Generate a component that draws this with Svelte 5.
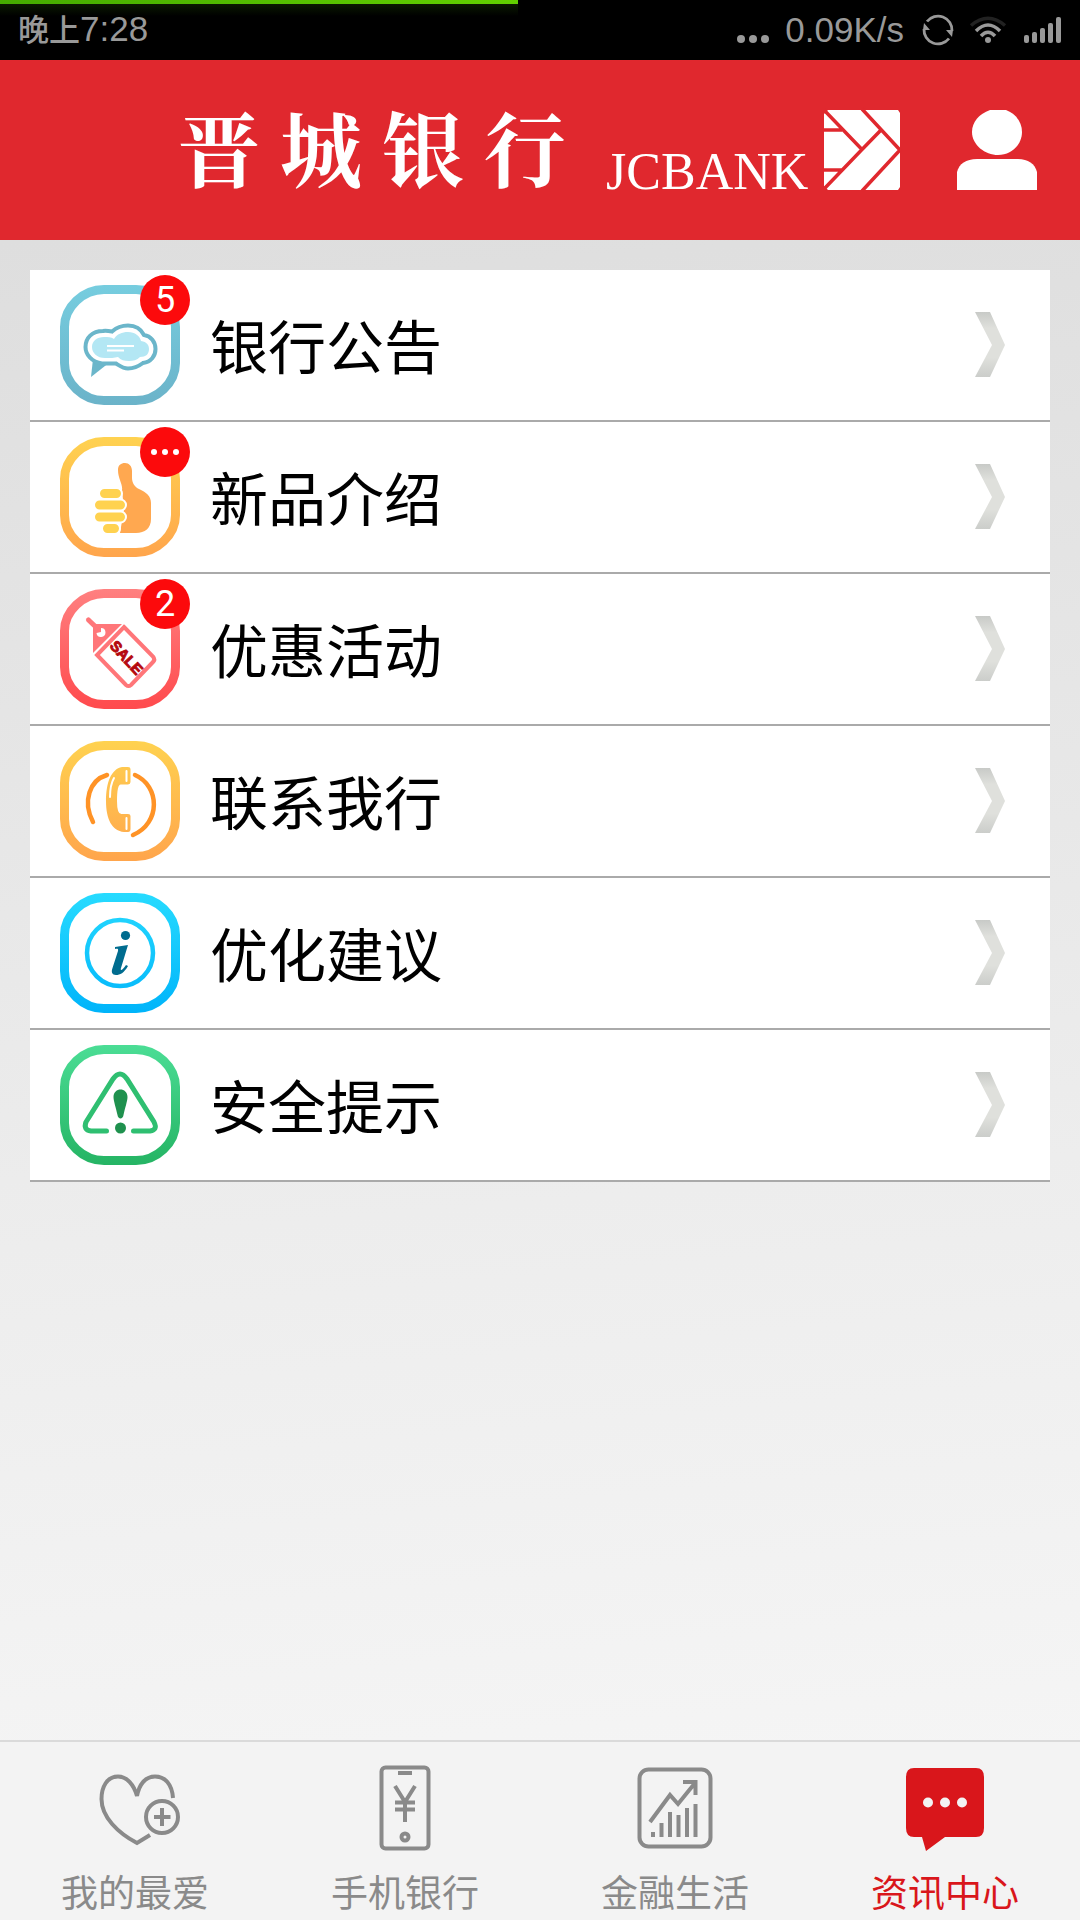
<script>
    const brand = ['晋', '城', '银', '行'];

    const items = [
        { id: 'notice', label: '银行公告', from: '#76cddf', to: '#6bb3c9', badge: '5' },
        { id: 'product', label: '新品介绍', from: '#ffd250', to: '#ffa54c', badge: 'more' },
        { id: 'sale', label: '优惠活动', from: '#ff8080', to: '#ff4a4d', badge: '2' },
        { id: 'contact', label: '联系我行', from: '#ffd250', to: '#ffa54c' },
        { id: 'advice', label: '优化建议', from: '#27dbff', to: '#00b4fa' },
        { id: 'safety', label: '安全提示', from: '#4bdd95', to: '#25b464' }
    ];

    const tabs = [
        { id: 'favorite', label: '我的最爱' },
        { id: 'mobile', label: '手机银行' },
        { id: 'finance', label: '金融生活' },
        { id: 'news', label: '资讯中心' }
    ];

    let activeTab = $state('news');

    const signalBars = [8, 11, 15, 20, 26];
    const progress = 48;
</script>

<div class="page">
    <div class="status-bar">
        <div class="progress" style="width: {progress}%"></div>
        <span class="time"><span class="period">晚上</span>7:28</span>
        <div class="status-right">
            <svg class="dots" width="32" height="34" viewBox="0 0 32 34" fill="#999">
                <circle cx="4" cy="26" r="4" />
                <circle cx="16" cy="26" r="4" />
                <circle cx="28" cy="26" r="4" />
            </svg>
            <span class="speed">0.09K/s</span>
            <svg class="sync" width="32" height="32" viewBox="0 0 32 32">
                <path d="M5 7.500A14 14 0 0 1 30 17M27 24.500A14 14 0 0 1 2 15" fill="none" stroke="#999" stroke-width="2.800" />
                <path d="M24 16h7l-1 7zM8 16H1l1-7z" fill="#999" />
            </svg>
            <svg class="wifi" width="36" height="28" viewBox="0 0 36 28" fill="none" stroke-width="3.500">
                <path d="M1 9.500Q18-5 35 9.500" stroke="#222" />
                <path d="M6 15Q18 3 30 15" stroke="#999" />
                <path d="M11 20Q18 12.500 25 20" stroke="#999" />
                <circle cx="18" cy="24" r="3" fill="#999" />
            </svg>
            <svg class="signal" width="38" height="26" viewBox="0 0 38 26" fill="#999">
                {#each signalBars as h, i}
                    <rect x={i * 8} y={26 - h} width="5" height={h} rx="2" />
                {/each}
            </svg>
        </div>
    </div>

    <header class="header">
        <h1 class="brand">
            {#each brand as ch}<span>{ch}</span>{/each}
        </h1>
        <span class="brand-en">JCBANK</span>
        <svg class="mark" width="76" height="80" viewBox="0 0 76 80">
            <rect width="76" height="80" fill="#fff" />
            <g fill="none" stroke="#e0282e" stroke-width="3.500">
                <path d="M0 0L38 39.500L0 79M38-1L76 40L38 81M38 39.500L57 20M0 20H18M0 60H18" />
            </g>
            <path d="M0 0H4L0 4zM0 80H4L0 76zM76 0H74L76 3zM76 80H74L76 77z" fill="#e0282e" />
        </svg>
        <button class="user" aria-label="用户">
            <svg width="80" height="80" viewBox="0 0 80 80" fill="#fff">
                <path d="M33 0H49C59 4 65 12 65 22C65 35 54 45 41 45S15 35 15 22C15 12 22 4 33 0z" />
                <path d="M0 62C2 54 9 49 20 49H61C71 49 78 54 80 62V80H0z" />
            </svg>
        </button>
    </header>

    <main class="content">
        <ul class="list">
            {#each items as item}
                <li>
                    <a class="row" href="#{item.id}">
                        <span class="icon">
                            <svg width="120" height="120" viewBox="0 0 120 120" fill="none">
                                <defs>
                                    <linearGradient id="g-{item.id}" x1="0" y1="0" x2="0" y2="120" gradientUnits="userSpaceOnUse">
                                        <stop offset="0" stop-color={item.from} />
                                        <stop offset="1" stop-color={item.to} />
                                    </linearGradient>
                                </defs>
                                <path
                                    d="M44 4.500H76C97 4.500 115.500 22 115.500 42V78C115.500 98 97 115.500 76 115.500H44C23 115.500 4.500 98 4.500 78V42C4.500 22 23 4.500 44 4.500z"
                                    stroke="url(#g-{item.id})"
                                    stroke-width="9"
                                />
                                {#if item.id === 'notice'}
                                    <path d="M33 74L31 92L50 77z" fill="#6bb6ca" />
                                    <path d="M52 46.500C57 42 62 40.500 68 40.500C75 40.500 81 44 84 50C91 51 95.500 57 95.500 64C95.500 71 91 77 83 78C79 81 74 83.500 68 83.500C63 83.500 60 81 56 78.500H42C32 77 25.500 70 25.500 62C25.500 53 32 46 43 46C46 45.500 49 46 52 46.500z" fill="#fff" stroke="#6bb6ca" stroke-width="4" />
                                    <path d="M54 54C57 49 62 47 68 47C75 47 80 51 81 56C87 57 89 60 89 64C89 69 86 72 80 72C77 75 73 76 69 76C64 76 61 75 58 72C54 73 51 73 45 73C37 73 32 68 32 62C32 56 37 52 44 52C48 52 51 52 54 54z" fill="#b3e7f4" />
                                    <path d="M47 61H74M47 65.500H64" stroke="#fff" stroke-width="2" />
                                {:else if item.id === 'product'}
                                    <path d="M58 33C58 28 61 26 65 26C69 26 72 29 72 34V41C72 46 75 50 79 52C86 55 91 59 91 66V82C91 91 85 96 76 96H60L64 72L62 53C63 47 58 42 58 33z" fill="#ffa850" />
                                    <g fill="#ffd250" stroke="#fff" stroke-width="2">
                                        <rect x="39" y="51" width="23" height="11" rx="5.500" />
                                        <rect x="34" y="62.500" width="32" height="11" rx="5.500" />
                                        <rect x="34" y="74.500" width="32" height="11" rx="5.500" />
                                        <rect x="42" y="86" width="18" height="11" rx="5.500" />
                                    </g>
                                {:else if item.id === 'sale'}
                                    <path d="M28.500 31L38 40" stroke="#ff7679" stroke-width="5" stroke-linecap="round" />
                                    <path d="M33 35H62L33 64z" fill="#ff7679" />
                                    <path d="M36.500 44A4.500 4.500 0 1 0 41 39L41 43z" fill="#fff" />
                                    <path d="M64 38L93 67.500Q95.500 70.500 93 73L71 96Q68.500 98 66 96L37 66z" stroke="#ff7679" stroke-width="4" />
                                    <text class="sale-text" x="67" y="74" transform="rotate(47 67 68)">SALE</text>
                                {:else if item.id === 'contact'}
                                    <path d="M47 34C30 39 22 60 33 81M75 34C100 45 101 82 73 94" stroke="#ff9326" stroke-width="4.500" stroke-linecap="round" />
                                    <path d="M68 26H62C51 28 46 42 46 60C46 78 52 90 64 91H68Q70.500 91 70.500 88V75Q70.500 73 68 73H62Q57 74 57 60Q57 43 61 43.500H68Q70.500 43 70.500 41V28Q70.500 26 68 26z" fill="url(#g-contact)" />
                                    <path d="M66.500 30V40M66.500 77V88M54 37Q50 44 50 56" stroke="#fff" stroke-width="2" stroke-linecap="round" />
                                {:else if item.id === 'advice'}
                                    <circle cx="60" cy="60" r="33" stroke="url(#g-advice)" stroke-width="4.500" />
                                    <circle cx="65.500" cy="42.500" r="4.600" fill="#006c8f" />
                                    <path d="M55 54L68 52L61 75C60 78 62 78 66 72L68 73C64 80 60 82 56 82C52 82 51 79 52.500 75L58 58C58.500 55.500 57.500 55.500 55 56z" fill="#006c8f" />
                                {:else}
                                    <path d="M46.500 86H31Q23 85 26 77L53 34Q60 24 67 34L94 77Q98 85 90 86H73.500" stroke="#2fbf71" stroke-width="5" stroke-linecap="round" />
                                    <path d="M53.500 52C53.500 42 67.500 42 67.500 52C67.500 56 65 63 63.500 70C63 74.500 58 74.500 57.500 70C56 63 53.500 56 53.500 52z" fill="#1f914e" />
                                    <circle cx="60.500" cy="83" r="5.500" fill="#1f914e" />
                                {/if}
                            </svg>
                            {#if item.badge === 'more'}
                                <span class="badge">
                                    <svg width="28" height="6" viewBox="0 0 28 6" fill="#fff">
                                        <circle cx="3" cy="3" r="3" />
                                        <circle cx="14" cy="3" r="3" />
                                        <circle cx="25" cy="3" r="3" />
                                    </svg>
                                </span>
                            {:else if item.badge}
                                <span class="badge">{item.badge}</span>
                            {/if}
                        </span>
                        <span class="label">{item.label}</span>
                        <svg class="arrow" width="30" height="66" viewBox="0 0 30 66">
                            <defs>
                                <linearGradient id="a-{item.id}" x1="0" y1="0" x2="0" y2="1">
                                    <stop offset="0" stop-color="#c8cac7" />
                                    <stop offset=".25" stop-color="#dfe0dc" />
                                    <stop offset=".7" stop-color="#dfe0dc" />
                                    <stop offset="1" stop-color="#cbcdca" />
                                </linearGradient>
                            </defs>
                            <path d="M0 0H15L30 33L15 65H0L17 33z" fill="url(#a-{item.id})" />
                        </svg>
                    </a>
                </li>
            {/each}
        </ul>
    </main>

    <nav class="tabs">
        {#each tabs as tab}
            <button class="tab" class:active={activeTab === tab.id} onclick={() => (activeTab = tab.id)}>
                <svg width="90" height="90" viewBox="0 0 90 90" fill="none" stroke="currentColor" stroke-width="4">
                    {#if tab.id === 'favorite'}
                        <path d="M83 38C82 24 75 16.500 65 16.500C55 16.500 49 25 47 36C44 25 37 16.500 28 16.500C17 16.500 11.500 27 11.500 39C11.500 57 28 73 47 83L60 75" />
                        <circle cx="72" cy="57" r="16" />
                        <path d="M64 57H80.500M72 48V66" />
                    {:else if tab.id === 'mobile'}
                        <rect x="21.500" y="7.500" width="47" height="81" rx="4" />
                        <path d="M38 13H52M35 26L45 42L55 26M45 42V62M35 42.500H55M35 49.500H55" />
                        <circle cx="45" cy="77" r="3.500" />
                    {:else if tab.id === 'finance'}
                        <rect x="9.500" y="9.500" width="71" height="77" rx="9" />
                        <path d="M20 62L40 35L48 44L65 23M53 22H65.500V35" />
                        <path d="M23 72V77M31.500 63V77M40 52V77M48.500 55V77M57 48V77M65.500 44V77" />
                    {:else}
                        <path d="M14 8H76Q84 8 84 17V68Q84 77 76 77H45L26 91L22 77H14Q6 77 6 68V17Q6 8 14 8z" fill="currentColor" stroke="none" />
                        <g fill="#f3f3f3" stroke="none">
                            <circle cx="28" cy="42.500" r="5" />
                            <circle cx="45" cy="42.500" r="5" />
                            <circle cx="62" cy="42.500" r="5" />
                        </g>
                    {/if}
                </svg>
                <span>{tab.label}</span>
            </button>
        {/each}
    </nav>
</div>

<style>
    :global(body) {
        margin: 0;
        font-family: "Noto Sans CJK SC", sans-serif;
    }

    svg {
        display: block;
        flex: none;
        overflow: visible;
    }

    .page {
        min-height: 100vh;
        display: flex;
        flex-direction: column;
        background: linear-gradient(175deg, #dedede 12%, #ededed 62%, #f5f5f5 92%);
    }

    .status-bar {
        position: relative;
        display: flex;
        align-items: center;
        justify-content: space-between;
        height: 60px;
        padding: 0 18px;
        background: #000;
        color: #999;
        font-family: "Liberation Sans", "Noto Sans CJK SC", sans-serif;
        font-size: 35px;
        line-height: 60px;
    }

    .progress {
        position: absolute;
        top: 0;
        left: 0;
        height: 16px;
        background:
            linear-gradient(90deg, #45ab00, #62d000) 0 0 / 100% 4px no-repeat,
            linear-gradient(#0d2200, #000);
    }

    .time {
        position: relative;
    }

    .period {
        font-size: 31px;
        font-weight: 500;
    }

    .status-right {
        display: flex;
        align-items: center;
    }

    .speed {
        margin: 0 18px 0 16px;
    }

    .wifi {
        margin: 0 18px 0 16px;
    }

    .header {
        display: flex;
        align-items: flex-end;
        height: 80px;
        padding: 50px 43px 50px 178px;
        background: #e0282e;
        color: #fff;
    }

    .brand {
        display: flex;
        gap: 20px;
        margin: 0 40px 0 0;
        font-family: "Noto Serif CJK SC", "Noto Sans CJK SC", serif;
        font-size: 82px;
        font-weight: 700;
        line-height: 72px;
        align-self: flex-start;
    }

    .brand-en {
        margin-right: 16px;
        font-family: "Liberation Serif", serif;
        font-size: 52px;
        line-height: 36px;
    }

    .user {
        margin-left: auto;
        padding: 0;
        border: none;
        background: none;
        cursor: pointer;
    }

    .content {
        flex: 1;
        padding: 30px;
    }

    .list {
        margin: 0;
        padding: 0;
        list-style: none;
    }

    .row {
        display: flex;
        align-items: center;
        height: 150px;
        padding: 0 45px 0 30px;
        border-bottom: 2px solid #aaa;
        background: #fff;
        color: #000;
        text-decoration: none;
    }

    .icon {
        position: relative;
        margin-right: 30px;
    }

    /* unread counter on the icon's corner */
    .badge {
        position: absolute;
        top: -10px;
        right: -10px;
        display: flex;
        align-items: center;
        justify-content: center;
        width: 50px;
        height: 50px;
        border-radius: 50%;
        background: #fc0a0c;
        color: #fff;
        font-family: Roboto, sans-serif;
        font-size: 36px;
        line-height: 50px;
    }

    .sale-text {
        fill: #b5090f;
        stroke: #b5090f;
        stroke-width: 1px;
        font-family: "Liberation Sans", sans-serif;
        font-size: 15px;
        font-weight: 700;
        text-anchor: middle;
    }

    .label {
        flex: 1;
        padding-bottom: 2px;
        font-size: 58px;
        line-height: 84px;
    }

    .tabs {
        display: grid;
        grid-template-columns: repeat(4, 1fr);
        border-top: 2px solid #dadada;
        background: #f3f3f3;
    }

    .tab {
        display: flex;
        flex-direction: column;
        align-items: center;
        gap: 14px;
        padding: 18px 0 2px;
        border: none;
        background: none;
        color: #8a8a8a;
        font-family: inherit;
        font-size: 37px;
        line-height: 54px;
        cursor: pointer;
    }

    .tab.active {
        color: #d9161b;
    }
</style>
